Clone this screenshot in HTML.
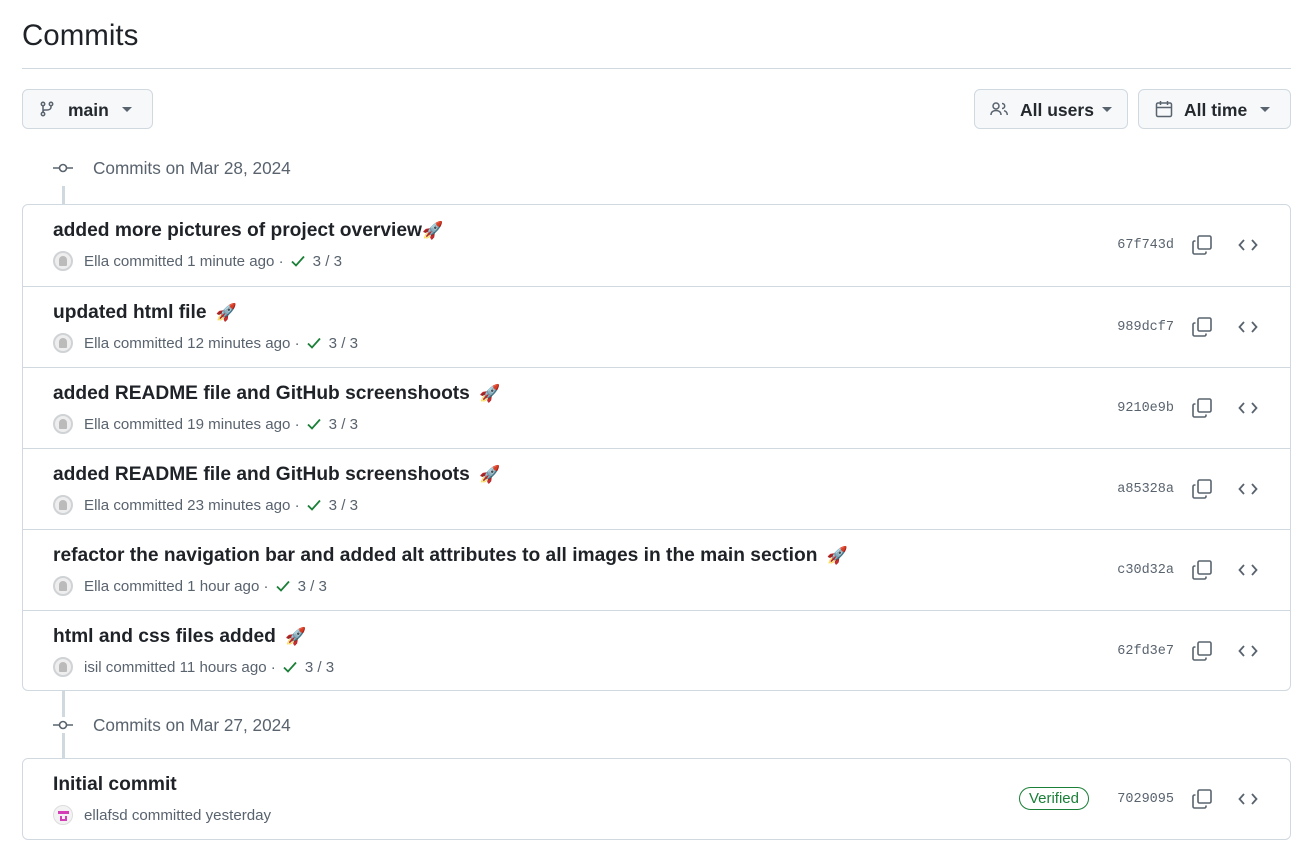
<!DOCTYPE html>
<html><head><meta charset="utf-8"><style>
*{box-sizing:border-box;margin:0;padding:0}
body{width:1308px;height:852px;background:#fff;font-family:"Liberation Sans","DejaVu Sans",sans-serif;color:#1f2328;position:relative;overflow:hidden}
.abs{position:absolute}
h1{position:absolute;left:22px;top:19px;font-size:29.5px;font-weight:400;color:#1f2328}
.hr{left:22px;top:68px;width:1269px;height:1px;background:#d1d9e0}
.btn{position:absolute;top:89px;height:40px;border:1px solid #d1d9e0;border-radius:6px;background:#f6f8fa;font-size:17.5px;font-weight:600;color:#25292e;display:flex;align-items:center}
.btn span:not(.caret){position:relative;top:1px}
.btn svg{flex:none}
.caret{width:0;height:0;border-left:5px solid transparent;border-right:5px solid transparent;border-top:5px solid #59636e;margin-left:auto}
.date{position:absolute;left:93px;font-size:17.2px;color:#59636e}
.tl{position:absolute;left:62px;width:3px;background:#d1d9e0}
.box{position:absolute;left:22px;width:1269px;border:1px solid #d1d9e0;border-radius:6px;background:#fff}
.row{position:relative;height:81px;border-top:1px solid #d1d9e0}
.row:first-child{border-top:none}
.t{position:absolute;left:30px;top:15px;font-size:19.2px;font-weight:600;color:#1f2328;white-space:nowrap}
.m{position:absolute;left:30px;top:46px;font-size:15.1px;color:#59636e;display:flex;align-items:center;white-space:nowrap}
.av{width:20px;height:20px;border-radius:50%;border:2px solid #d0d3d6;background:#eee;margin-right:11px;position:relative}
.av:after{content:"";position:absolute;left:4px;top:3px;width:8px;height:10px;background:#bbb;border-radius:4px 4px 1px 1px}
.chk{margin:0 7px 0 6px;display:inline-flex}
.sha{position:absolute;right:116px;top:33px;font-family:"Liberation Mono","DejaVu Sans Mono",monospace;font-size:13.5px;color:#59636e}
.cp{position:absolute;right:77px;top:29px}
.cd{position:absolute;right:32px;top:32px}
.rk{font-size:17px;font-weight:400;margin-left:4px}
.ver{position:absolute;right:201px;top:28px;border:1px solid #1a7f37;border-radius:12px;color:#1a7f37;font-size:15px;padding:2px 9px}
</style></head><body>
<h1>Commits</h1>
<div class="abs hr"></div>
<div class="btn" style="left:22px;width:131px;padding:0 20px 0 16px">
<svg width="16" height="16" viewBox="0 0 16 16" fill="none" stroke="#59636e" stroke-width="1.5"><circle cx="4" cy="3" r="1.7"/><circle cx="4" cy="13" r="1.7"/><circle cx="12" cy="3" r="1.7"/><path d="M4 4.7v6.6M12 4.7v1.3c0 2-2 3-4 3H5.5c-1 0-1.5.7-1.5 1.6"/></svg>
<span style="margin-left:13px">main</span><span class="caret"></span></div>
<div class="btn" style="left:974px;width:154px;padding:0 15px 0 15px">
<svg width="20" height="16" viewBox="0 0 20 16" fill="none" stroke="#59636e" stroke-width="1.5"><circle cx="6" cy="5" r="3"/><path d="M1 14c0-3 2.2-4.5 5-4.5s5 1.5 5 4.5M12 2.5c1.5 0 2.7 1.1 2.7 2.5S13.5 7.5 12 7.5M14 9.7c2 .5 3.3 2 3.3 4.3"/></svg>
<span style="margin-left:10px">All users</span><span class="caret"></span></div>
<div class="btn" style="left:1138px;width:153px;padding:0 20px 0 16px">
<svg width="18" height="18" viewBox="0 0 18 18" fill="none" stroke="#59636e" stroke-width="1.5"><rect x="1.5" y="3" width="15" height="13.5" rx="1.5"/><path d="M1.5 7.5h15M5.5 1v4M12.5 1v4"/></svg>
<span style="margin-left:11px">All time</span><span class="caret"></span></div>

<div class="tl" style="top:186px;height:18px"></div>
<svg class="abs" style="left:52px;top:160px" width="22" height="16" viewBox="0 0 22 16" fill="none" stroke="#59636e" stroke-width="1.6"><circle cx="11" cy="8" r="3.5"/><path d="M1 8h6.5M14.5 8H21"/></svg>
<div class="date" style="top:158px">Commits on Mar 28, 2024</div>

<div class="box" style="top:204px;height:487px">
<div class="row"><div class="t">added more pictures of project overview<span class="rk" style="margin-left:0">🚀</span></div><div class="m"><span class="av"></span>Ella committed 1 minute ago ·<span class="chk"><svg width="16" height="16" viewBox="0 0 16 16" fill="none" stroke="#1a7f37" stroke-width="1.8"><path d="M2 8.5l4 4 8-9"/></svg></span>3 / 3</div><div class="sha">67f743d</div>
<svg class="cp" width="22" height="22" viewBox="0 0 22 22" fill="none" stroke="#59636e" stroke-width="1.6"><rect x="7" y="2" width="13" height="13" rx="1.5"/><path d="M4.5 7H3.5C2.7 7 2 7.7 2 8.5v10c0 .8.7 1.5 1.5 1.5h10c.8 0 1.5-.7 1.5-1.5v-1"/></svg>
<svg class="cd" width="20" height="16" viewBox="0 0 20 16" fill="none" stroke="#59636e" stroke-width="1.8"><path d="M6 3L1.5 8 6 13M14 3l4.5 5L14 13"/></svg></div>
<div class="row"><div class="t">updated html file <span class="rk">🚀</span></div><div class="m"><span class="av"></span>Ella committed 12 minutes ago ·<span class="chk"><svg width="16" height="16" viewBox="0 0 16 16" fill="none" stroke="#1a7f37" stroke-width="1.8"><path d="M2 8.5l4 4 8-9"/></svg></span>3 / 3</div><div class="sha">989dcf7</div>
<svg class="cp" width="22" height="22" viewBox="0 0 22 22" fill="none" stroke="#59636e" stroke-width="1.6"><rect x="7" y="2" width="13" height="13" rx="1.5"/><path d="M4.5 7H3.5C2.7 7 2 7.7 2 8.5v10c0 .8.7 1.5 1.5 1.5h10c.8 0 1.5-.7 1.5-1.5v-1"/></svg>
<svg class="cd" width="20" height="16" viewBox="0 0 20 16" fill="none" stroke="#59636e" stroke-width="1.8"><path d="M6 3L1.5 8 6 13M14 3l4.5 5L14 13"/></svg></div>
<div class="row"><div class="t">added README file and GitHub screenshoots <span class="rk">🚀</span></div><div class="m"><span class="av"></span>Ella committed 19 minutes ago ·<span class="chk"><svg width="16" height="16" viewBox="0 0 16 16" fill="none" stroke="#1a7f37" stroke-width="1.8"><path d="M2 8.5l4 4 8-9"/></svg></span>3 / 3</div><div class="sha">9210e9b</div>
<svg class="cp" width="22" height="22" viewBox="0 0 22 22" fill="none" stroke="#59636e" stroke-width="1.6"><rect x="7" y="2" width="13" height="13" rx="1.5"/><path d="M4.5 7H3.5C2.7 7 2 7.7 2 8.5v10c0 .8.7 1.5 1.5 1.5h10c.8 0 1.5-.7 1.5-1.5v-1"/></svg>
<svg class="cd" width="20" height="16" viewBox="0 0 20 16" fill="none" stroke="#59636e" stroke-width="1.8"><path d="M6 3L1.5 8 6 13M14 3l4.5 5L14 13"/></svg></div>
<div class="row"><div class="t">added README file and GitHub screenshoots <span class="rk">🚀</span></div><div class="m"><span class="av"></span>Ella committed 23 minutes ago ·<span class="chk"><svg width="16" height="16" viewBox="0 0 16 16" fill="none" stroke="#1a7f37" stroke-width="1.8"><path d="M2 8.5l4 4 8-9"/></svg></span>3 / 3</div><div class="sha">a85328a</div>
<svg class="cp" width="22" height="22" viewBox="0 0 22 22" fill="none" stroke="#59636e" stroke-width="1.6"><rect x="7" y="2" width="13" height="13" rx="1.5"/><path d="M4.5 7H3.5C2.7 7 2 7.7 2 8.5v10c0 .8.7 1.5 1.5 1.5h10c.8 0 1.5-.7 1.5-1.5v-1"/></svg>
<svg class="cd" width="20" height="16" viewBox="0 0 20 16" fill="none" stroke="#59636e" stroke-width="1.8"><path d="M6 3L1.5 8 6 13M14 3l4.5 5L14 13"/></svg></div>
<div class="row"><div class="t">refactor the navigation bar and added alt attributes to all images in the main section <span class="rk">🚀</span></div><div class="m"><span class="av"></span>Ella committed 1 hour ago ·<span class="chk"><svg width="16" height="16" viewBox="0 0 16 16" fill="none" stroke="#1a7f37" stroke-width="1.8"><path d="M2 8.5l4 4 8-9"/></svg></span>3 / 3</div><div class="sha">c30d32a</div>
<svg class="cp" width="22" height="22" viewBox="0 0 22 22" fill="none" stroke="#59636e" stroke-width="1.6"><rect x="7" y="2" width="13" height="13" rx="1.5"/><path d="M4.5 7H3.5C2.7 7 2 7.7 2 8.5v10c0 .8.7 1.5 1.5 1.5h10c.8 0 1.5-.7 1.5-1.5v-1"/></svg>
<svg class="cd" width="20" height="16" viewBox="0 0 20 16" fill="none" stroke="#59636e" stroke-width="1.8"><path d="M6 3L1.5 8 6 13M14 3l4.5 5L14 13"/></svg></div>
<div class="row"><div class="t">html and css files added <span class="rk">🚀</span></div><div class="m"><span class="av"></span>isil committed 11 hours ago ·<span class="chk"><svg width="16" height="16" viewBox="0 0 16 16" fill="none" stroke="#1a7f37" stroke-width="1.8"><path d="M2 8.5l4 4 8-9"/></svg></span>3 / 3</div><div class="sha">62fd3e7</div>
<svg class="cp" width="22" height="22" viewBox="0 0 22 22" fill="none" stroke="#59636e" stroke-width="1.6"><rect x="7" y="2" width="13" height="13" rx="1.5"/><path d="M4.5 7H3.5C2.7 7 2 7.7 2 8.5v10c0 .8.7 1.5 1.5 1.5h10c.8 0 1.5-.7 1.5-1.5v-1"/></svg>
<svg class="cd" width="20" height="16" viewBox="0 0 20 16" fill="none" stroke="#59636e" stroke-width="1.8"><path d="M6 3L1.5 8 6 13M14 3l4.5 5L14 13"/></svg></div>
</div>

<div class="tl" style="top:691px;height:26px"></div>
<div class="tl" style="top:733px;height:25px"></div>
<svg class="abs" style="left:52px;top:717px" width="22" height="16" viewBox="0 0 22 16" fill="none" stroke="#59636e" stroke-width="1.6"><circle cx="11" cy="8" r="3.5"/><path d="M1 8h6.5M14.5 8H21"/></svg>
<div class="date" style="top:715px">Commits on Mar 27, 2024</div>

<div class="box" style="top:758px;height:82px">
<div class="row"><div class="t">Initial commit</div><div class="m"><span style="width:20px;height:20px;border-radius:50%;border:1px solid #ddd;background:#f3f3f3;margin-right:11px;position:relative;display:inline-block"><span style="position:absolute;left:4px;top:5px;width:11px;height:3px;background:#d43fb7"></span><span style="position:absolute;left:6px;top:10px;width:7px;height:5px;border:2px solid #d43fb7;border-top:none"></span></span>ellafsd committed yesterday</div>
<div class="ver">Verified</div>
<div class="sha">7029095</div>
<svg class="cp" width="22" height="22" viewBox="0 0 22 22" fill="none" stroke="#59636e" stroke-width="1.6"><rect x="7" y="2" width="13" height="13" rx="1.5"/><path d="M4.5 7H3.5C2.7 7 2 7.7 2 8.5v10c0 .8.7 1.5 1.5 1.5h10c.8 0 1.5-.7 1.5-1.5v-1"/></svg>
<svg class="cd" width="20" height="16" viewBox="0 0 20 16" fill="none" stroke="#59636e" stroke-width="1.8"><path d="M6 3L1.5 8 6 13M14 3l4.5 5L14 13"/></svg></div>
</div>
</body></html>
